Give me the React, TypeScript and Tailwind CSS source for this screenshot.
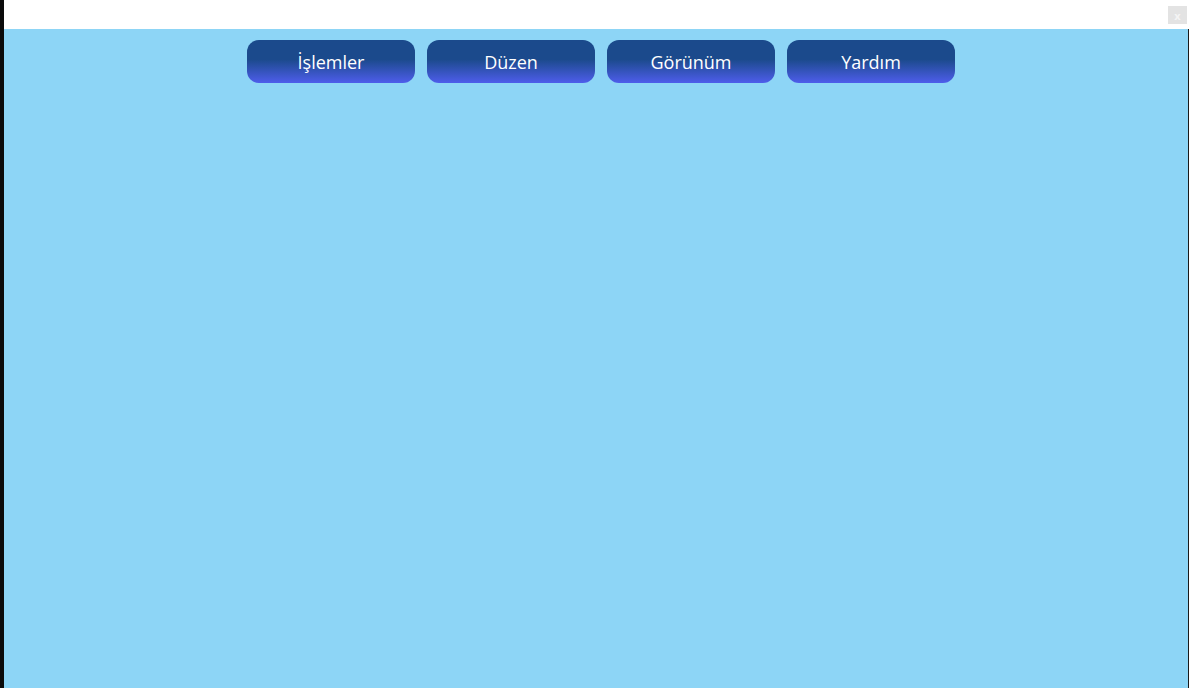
import React from "react";

const menus = ["İşlemler", "Düzen", "Görünüm", "Yardım"];

const App: React.FC = () => {
  return (
    <div className="flex h-[688px] w-[1189px] overflow-hidden bg-white font-['Open_Sans',sans-serif]">
      {/* left window edge */}
      <div className="w-[4px] shrink-0 bg-[#0b0b0b]" />

      <div className="flex min-w-0 flex-1 flex-col">
        {/* title strip */}
        <div className="flex h-[29px] shrink-0 items-start justify-end bg-white pt-[6px] pr-[1px]">
          <button className="flex h-[18px] w-[19px] items-center justify-center bg-[#e3e3e3] text-[11px] font-bold leading-none text-[#f4f4f4]">
            x
          </button>
        </div>

        {/* main area */}
        <div className="flex-1 bg-[#8dd5f6]">
          <div className="flex justify-center gap-[12px] pt-[11px] pl-[10px]">
            {menus.map((m) => (
              <button
                key={m}
                className="flex h-[43px] w-[168px] items-center justify-center rounded-[12px] bg-[linear-gradient(to_bottom,#1b4a8c_0%,#1b4a8c_45%,#4e5deb_100%)] pt-[2px] text-[18px] text-white"
              >
                {m}
              </button>
            ))}
          </div>
        </div>
      </div>

      {/* right window edge */}
      <div className="flex w-[1px] shrink-0 flex-col">
        <div className="h-[29px] bg-white" />
        <div className="flex-1 bg-[#1a1a1a]" />
      </div>
    </div>
  );
};

export default App;
